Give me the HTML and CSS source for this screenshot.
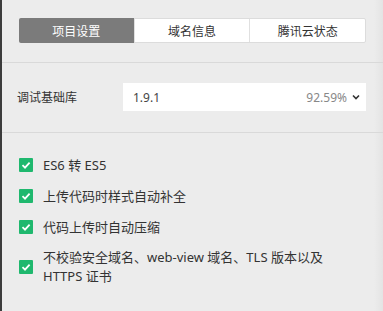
FILE: index.html
```html
<!DOCTYPE html>
<html lang="zh">
<head>
<meta charset="utf-8">
<link rel="stylesheet" href="styles.css">
</head>
<body>
<div class="panel">
  <section class="section tabs-section">
    <div class="tabs">
      <div class="tab active">项目设置</div>
      <div class="tab">域名信息</div>
      <div class="tab">腾讯云状态</div>
    </div>
  </section>
  <section class="section lib-section">
    <div class="lib-row">
      <div class="lib-label">调试基础库</div>
      <div class="select">
        <span class="select-value">1.9.1</span>
        <span class="select-pct">92.59%</span>
        <svg class="chev" width="8" height="6" viewBox="0 0 8 6"><path d="M1 1.5 L4 4.5 L7 1.5" fill="none" stroke="#333" stroke-width="1.6"/></svg>
      </div>
    </div>
  </section>
  <section class="checks">
    <div class="check"><span class="box"><svg width="14" height="14" viewBox="0 0 14 14"><path d="M3.5 7.2 L6 9.6 L10.6 4.6" fill="none" stroke="#fff" stroke-width="1.8"/></svg></span><span class="check-text">ES6 转 ES5</span></div>
    <div class="check"><span class="box"><svg width="14" height="14" viewBox="0 0 14 14"><path d="M3.5 7.2 L6 9.6 L10.6 4.6" fill="none" stroke="#fff" stroke-width="1.8"/></svg></span><span class="check-text">上传代码时样式自动补全</span></div>
    <div class="check"><span class="box"><svg width="14" height="14" viewBox="0 0 14 14"><path d="M3.5 7.2 L6 9.6 L10.6 4.6" fill="none" stroke="#fff" stroke-width="1.8"/></svg></span><span class="check-text">代码上传时自动压缩</span></div>
    <div class="check multi"><span class="box"><svg width="14" height="14" viewBox="0 0 14 14"><path d="M3.5 7.2 L6 9.6 L10.6 4.6" fill="none" stroke="#fff" stroke-width="1.8"/></svg></span><span class="check-text">不校验安全域名、web-view 域名、TLS 版本以及<br>HTTPS 证书</span></div>
  </section>
</div>
</body>
</html>
```

FILE: styles.css
```css
html, body {
  margin: 0;
  padding: 0;
  height: 100%;
  background: #ebebeb;
}
body {
  font-family: "Noto Sans", "Noto Sans CJK SC", sans-serif;
  color: #333;
}
.panel {
  height: 311px;
  border-left: 2px solid #3c3c3c;
  background: linear-gradient(to right, #ececec 0, #ececec 372px, #e2e2e2 383px);
  box-sizing: border-box;
}
.section {
  border-bottom: 1px solid #d9d9d9;
}
.tabs-section {
  padding: 18px 17px 19px 17px;
}
.tabs {
  display: flex;
  height: 25px;
  border: 1px solid #dcdcdc;
  border-radius: 2px;
  background: #fff;
  box-sizing: border-box;
}
.tab {
  flex: 1;
  display: flex;
  align-items: center;
  justify-content: center;
  font-size: 12px;
  color: #333;
  border-left: 1px solid #e0e0e0;
}
.tab:first-child { border-left: none; }
.tab.active {
  background: #7b7b7b;
  color: #fff;
  margin: -1px 0 -1px -1px;
  border-radius: 2px 0 0 2px;
}
.lib-section {
  padding: 20px 17px 21px 15px;
}
.lib-row {
  display: flex;
  align-items: center;
}
.lib-label {
  width: 106px;
  font-size: 12px;
}
.select {
  flex: 1;
  height: 28px;
  background: #fff;
  display: flex;
  align-items: center;
  padding: 0 6px 0 10px;
  font-size: 12px;
}
.select-value { flex: 1; color: #444; }
.select-pct { color: #888; margin-right: 5px; }
.chev { display: block; }
.checks {
  padding: 16px 0 0 17px;
}
.check {
  display: flex;
  align-items: center;
  height: 31px;
  font-size: 13px;
}
.check.multi {
  height: auto;
  margin-top: 6px;
  line-height: 19px;
}
.box {
  width: 14px;
  height: 14px;
  background: #1fb86e;
  border-radius: 1px;
  flex: none;
  margin-right: 10px;
}
.box svg { display: block; }
.check-text { color: #333; }
```
